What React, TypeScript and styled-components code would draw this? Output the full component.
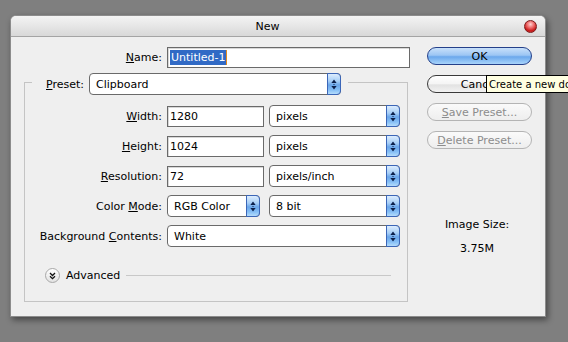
import React from 'react';
import styled, { createGlobalStyle } from 'styled-components';

const GlobalStyle = createGlobalStyle`
  html, body { margin: 0; padding: 0; overflow: hidden; background: #7f7f7f; }
  body { font-family: "DejaVu Sans", Tahoma, sans-serif; font-size: 11px; color: #000; }
`;

const Page = styled.div`
  width: 568px;
  height: 342px;
  box-sizing: border-box;
  padding: 15px 0 0 10px;
  background: #7f7f7f;
  overflow: hidden;
`;

const Window = styled.div`
  width: 536px;
  height: 302px;
  box-sizing: border-box;
  background: #efefef;
  border: 1px solid #8c8c8c;
  border-radius: 6px 6px 0 0;
  box-shadow: 2px 3px 6px rgba(0, 0, 0, 0.45);
  display: flex;
  flex-direction: column;
`;

const TitleBar = styled.div`
  height: 21px;
  box-sizing: border-box;
  display: flex;
  align-items: center;
  border-bottom: 1px solid #a4a4a4;
  border-radius: 5px 5px 0 0;
  background: linear-gradient(#f4f4f4, #e6e6e6 50%, #d8d8d8);
`;

const Title = styled.div`
  flex: 1;
  text-align: center;
  font-size: 11px;
`;

const CloseButton = styled.div`
  width: 13px;
  height: 13px;
  margin-right: 8px;
  border-radius: 50%;
  box-sizing: border-box;
  border: 1px solid #7a1a1a;
  background: radial-gradient(circle at 50% 30%, #ffd0d0 0%, #f07070 35%, #c81818 70%, #e05050 100%);
`;

const Body = styled.div`
  display: flex;
  padding: 10px 0 0 13px;
`;

const LeftCol = styled.div`
  width: 386px;
  display: flex;
  flex-direction: column;
`;

const NameRow = styled.div`
  display: grid;
  grid-template-columns: 138px 243px;
  column-gap: 5px;
  align-items: center;
`;

const Label = styled.div`
  text-align: right;
  white-space: nowrap;
`;

const U = styled.span`
  text-decoration: underline;
`;

const TextField = styled.div<{ $w?: number }>`
  height: 21px;
  width: ${p => (p.$w ? `${p.$w}px` : '100%')};
  box-sizing: border-box;
  border: 1px solid #6a6a6a;
  background: #fff;
  box-shadow: inset 1px 1px 0 #d8d8d8;
  display: flex;
  align-items: center;
  padding-left: 2px;
  white-space: nowrap;
`;

const Selected = styled.span`
  background: #316ac5;
  color: #fff;
  padding: 0 1px;
  border-right: 1px solid #e08a20;
  line-height: 15px;
`;

const Group = styled.fieldset`
  margin: 1px 0 0 0;
  width: 384px;
  box-sizing: border-box;
  border: 1px solid #c4c4c4;
  padding: 0 0 18px 0;
  min-width: 0;
`;

const Legend = styled.legend`
  margin-left: 7px;
  padding: 4px 7px 0 14px;
`;

const LegendInner = styled.div`
  display: flex;
  align-items: center;
  gap: 5px;
`;

const FormGrid = styled.div`
  display: grid;
  grid-template-columns: 137px 97px 131px;
  column-gap: 5px;
  row-gap: 8px;
  padding-top: 10px;
  align-items: center;
`;

const SelectBox = styled.div<{ $w?: number; $span?: boolean }>`
  height: 22px;
  width: ${p => (p.$w ? `${p.$w}px` : '100%')};
  box-sizing: border-box;
  grid-column: ${p => (p.$span ? '2 / 4' : 'auto')};
  display: flex;
  align-items: stretch;
  border: 1px solid #6a6a6a;
  border-radius: 4px;
  background: #fff;
`;

const SelectText = styled.span`
  flex: 1;
  display: flex;
  align-items: center;
  padding-left: 6px;
  white-space: nowrap;
`;

const ArrowCap = styled.span`
  width: 14px;
  margin: -1px -1px -1px 0;
  box-sizing: border-box;
  border-radius: 0 4px 4px 0;
  border: 1px solid #3b66b8;
  background: linear-gradient(#dcecfd 0%, #a8cff7 35%, #6aa6ea 55%, #86bff6 80%, #b4dcfc 100%);
  display: flex;
  align-items: center;
  justify-content: center;
`;

const Arrows = () => (
  <svg width="6" height="11" viewBox="0 0 6 11">
    <path d="M3 0.5 L5.6 4 H0.4 Z" fill="#0c1f4a" />
    <path d="M2.5 5 H3.5 V6 H2.5 Z" fill="#0c1f4a" />
    <path d="M3 10.5 L5.6 7 H0.4 Z" fill="#0c1f4a" />
  </svg>
);

const Select = ({ children, w, span }: { children: React.ReactNode; w?: number; span?: boolean }) => (
  <SelectBox $w={w} $span={span}>
    <SelectText>{children}</SelectText>
    <ArrowCap>
      <Arrows />
    </ArrowCap>
  </SelectBox>
);

const AdvancedRow = styled.div`
  margin-top: 21px;
  padding: 0 16px 0 20px;
  height: 15px;
  display: flex;
  align-items: center;
`;

const AdvIcon = styled.div`
  width: 15px;
  height: 15px;
  box-sizing: border-box;
  border-radius: 50%;
  border: 1px solid #a8a8a8;
  background: linear-gradient(#ffffff, #e2e2e2);
  display: flex;
  align-items: center;
  justify-content: center;
  margin-right: 6px;
`;

const Rule = styled.div`
  flex: 1;
  height: 1px;
  background: #c8c8c8;
  margin-left: 6px;
`;

const RightCol = styled.div`
  width: 105px;
  margin-left: 17px;
  display: flex;
  flex-direction: column;
  gap: 10px;
`;

const Button = styled.div<{ $variant?: 'default' | 'normal' | 'disabled' }>`
  height: 18px;
  box-sizing: border-box;
  border-radius: 9px;
  display: flex;
  align-items: center;
  justify-content: center;
  white-space: nowrap;
  border: 1px solid
    ${p => (p.$variant === 'default' ? '#24408a' : p.$variant === 'disabled' ? '#b4b4b4' : '#3a3a3a')};
  color: ${p => (p.$variant === 'disabled' ? '#8c8c8c' : '#000')};
  background: ${p =>
    p.$variant === 'default'
      ? 'linear-gradient(#c8e0fa 0%, #9cc6f4 45%, #6ba8ec 55%, #a8d4fb 100%)'
      : p.$variant === 'disabled'
      ? 'linear-gradient(#fafafa, #eeeeee)'
      : 'linear-gradient(#ffffff 0%, #f4f4f4 50%, #e2e2e2 55%, #f2f2f2 100%)'};
`;

const TipAnchor = styled.div`
  position: relative;
`;

const Tooltip = styled.div`
  position: absolute;
  left: 59px;
  top: 0;
  height: 18px;
  box-sizing: border-box;
  padding: 0 2px;
  background: #ffffe1;
  border: 1px solid #000;
  border-right: none;
  display: flex;
  align-items: center;
  white-space: nowrap;
  font-size: 10px;
`;

const ImageSize = styled.div`
  margin-top: 59px;
  display: flex;
  flex-direction: column;
  align-items: center;
  gap: 11px;
  padding-right: 5px;
`;

const App = () => (
  <Page>
    <GlobalStyle />
    <Window>
      <TitleBar>
        <Title>New</Title>
        <CloseButton />
      </TitleBar>
      <Body>
        <LeftCol>
          <NameRow>
            <Label>
              <U>N</U>ame:
            </Label>
            <TextField>
              <Selected>Untitled-1</Selected>
            </TextField>
          </NameRow>
          <Group>
            <Legend>
              <LegendInner>
                <Label>
                  <U>P</U>reset:
                </Label>
                <Select w={252}>Clipboard</Select>
              </LegendInner>
            </Legend>
            <FormGrid>
              <Label>
                <U>W</U>idth:
              </Label>
              <TextField>1280</TextField>
              <Select>pixels</Select>

              <Label>
                <U>H</U>eight:
              </Label>
              <TextField>1024</TextField>
              <Select>pixels</Select>

              <Label>
                <U>R</U>esolution:
              </Label>
              <TextField>72</TextField>
              <Select>pixels/inch</Select>

              <Label>
                Color <U>M</U>ode:
              </Label>
              <Select w={93}>RGB Color</Select>
              <Select>8 bit</Select>

              <Label>
                Background <U>C</U>ontents:
              </Label>
              <Select span>White</Select>
            </FormGrid>
            <AdvancedRow>
              <AdvIcon>
                <svg width="7" height="8" viewBox="0 0 7 8">
                  <path d="M1 1 L3.5 3.5 L6 1" stroke="#111" strokeWidth="1.3" fill="none" />
                  <path d="M1 4.2 L3.5 6.7 L6 4.2" stroke="#111" strokeWidth="1.3" fill="none" />
                </svg>
              </AdvIcon>
              Advanced
              <Rule />
            </AdvancedRow>
          </Group>
        </LeftCol>
        <RightCol>
          <Button $variant="default">OK</Button>
          <TipAnchor>
            <Button $variant="normal">Cancel</Button>
            <Tooltip>Create a new do</Tooltip>
          </TipAnchor>
          <Button $variant="disabled">
            <U>S</U>ave Preset...
          </Button>
          <Button $variant="disabled">
            <U>D</U>elete Preset...
          </Button>
          <ImageSize>
            <div>Image Size:</div>
            <div>3.75M</div>
          </ImageSize>
        </RightCol>
      </Body>
    </Window>
  </Page>
);

export default App;
